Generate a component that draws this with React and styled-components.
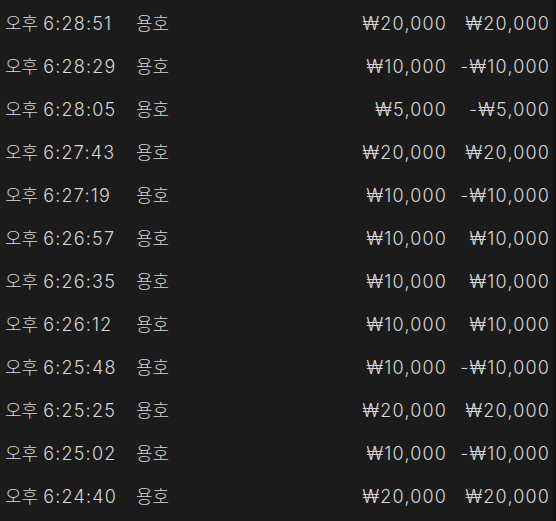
import React from "react";
import styled, { createGlobalStyle } from "styled-components";

const GlobalStyle = createGlobalStyle`
  html, body {
    margin: 0;
    padding: 0;
    background: #1b1b1b;
  }
  body {
    font-family: Inter, "Noto Sans CJK KR", sans-serif;
  }
`;

const rows = [
    { time: "6:28:51", name: "용호", amount: "₩20,000", change: "₩20,000" },
    { time: "6:28:29", name: "용호", amount: "₩10,000", change: "-₩10,000" },
    { time: "6:28:05", name: "용호", amount: "₩5,000", change: "-₩5,000" },
    { time: "6:27:43", name: "용호", amount: "₩20,000", change: "₩20,000" },
    { time: "6:27:19", name: "용호", amount: "₩10,000", change: "-₩10,000" },
    { time: "6:26:57", name: "용호", amount: "₩10,000", change: "₩10,000" },
    { time: "6:26:35", name: "용호", amount: "₩10,000", change: "₩10,000" },
    { time: "6:26:12", name: "용호", amount: "₩10,000", change: "₩10,000" },
    { time: "6:25:48", name: "용호", amount: "₩10,000", change: "-₩10,000" },
    { time: "6:25:25", name: "용호", amount: "₩20,000", change: "₩20,000" },
    { time: "6:25:02", name: "용호", amount: "₩10,000", change: "-₩10,000" },
    { time: "6:24:40", name: "용호", amount: "₩20,000", change: "₩20,000" },
];

const App = () => {
    return (
        <>
            <GlobalStyle />
            <Frame>
                <List>
                    {rows.map((r, i) => (
                        <Row key={i}>
                            <Time>
                                오후 <Digits>{r.time}</Digits>
                            </Time>
                            <Name>{r.name}</Name>
                            <Amount>
                                <Digits>{r.amount}</Digits>
                            </Amount>
                            <Change>
                                <Digits>{r.change}</Digits>
                            </Change>
                        </Row>
                    ))}
                </List>
            </Frame>
        </>
    );
};

const Frame = styled.div`
    width: 556px;
    height: 521px;
    overflow: hidden;
    display: flex;
    background: #1b1b1b;
    border-right: 3px solid #131313;
    box-sizing: border-box;
`;

const List = styled.div`
    flex: 1;
    display: flex;
    flex-direction: column;
`;

const Row = styled.div`
    display: grid;
    grid-template-columns: 131px 1fr auto 103px;
    align-items: center;
    height: 43px;
    padding: 0 4px 0 5px;
    color: #d6d6d6;
    font-size: 18px;
    font-weight: 300;
    line-height: 1;
    &:first-child {
        margin-top: 2px;
    }
`;

const Digits = styled.span`
    letter-spacing: 1.2px;
    margin-right: -1.2px;
`;

const Time = styled.span`
    white-space: nowrap;
`;

const Name = styled.span`
    white-space: nowrap;
`;

const Amount = styled.span`
    text-align: right;
    white-space: nowrap;
`;

const Change = styled.span`
    text-align: right;
    white-space: nowrap;
`;

export default App;
